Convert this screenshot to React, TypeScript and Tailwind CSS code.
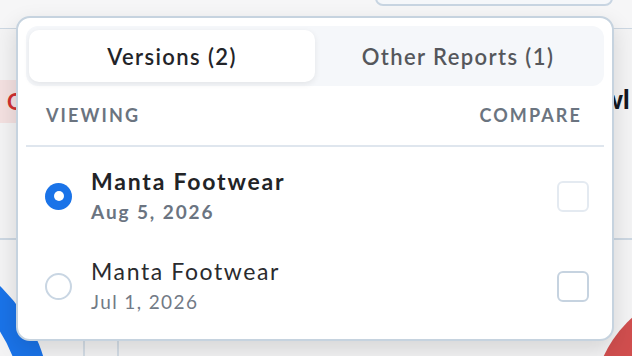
import React from 'react';

const font = { fontFamily: 'Lato, "Noto Sans", sans-serif' };

function Radio({ checked }: { checked: boolean }) {
  if (checked) {
    return (
      <span className="w-[27px] h-[27px] rounded-full bg-[#1a73e8] flex items-center justify-center shrink-0">
        <span className="w-[10px] h-[10px] rounded-full bg-white" />
      </span>
    );
  }
  return <span className="w-[27px] h-[27px] rounded-full border-2 border-[#c9d6e3] bg-white shrink-0" />;
}

function Row({
  name,
  date,
  active,
}: {
  name: string;
  date: string;
  active: boolean;
}) {
  return (
    <div className="h-[90px] flex items-center pl-[19px] pr-[15px]">
      <Radio checked={active} />
      <div className="ml-[19px] flex-1 flex flex-col">
        <span
          className={
            active
              ? 'text-[23px] leading-[31px] font-bold tracking-[1.8px] text-[#222326]'
              : 'text-[23px] leading-[31px] font-normal tracking-[1.6px] text-[#2a2b2e]'
          }
        >
          {name}
        </span>
        <span
          className={
            active
              ? 'text-[19px] leading-[29px] font-bold tracking-[1.9px] text-[#6b7481]'
              : 'text-[19px] leading-[29px] font-normal tracking-[1.4px] text-[#727a86]'
          }
        >
          {date}
        </span>
      </div>
      <span
        className={
          active
            ? 'w-[32px] h-[31px] rounded-[6px] border-2 border-[#e4eaf1] bg-white shrink-0'
            : 'w-[32px] h-[31px] rounded-[6px] border-2 border-[#c6d3e0] bg-white shrink-0'
        }
      />
    </div>
  );
}

export default function App() {
  return (
    <div className="w-[632px] h-[356px] relative overflow-hidden bg-[#f3f3f4]" style={font}>
      {/* page behind the popover */}
      <div className="absolute left-0 right-0 top-0 h-[29px] border-b border-[#ccd7e2] bg-[#f6f6f7]" />
      <div className="absolute left-[375px] top-[-20px] w-[238px] h-[26px] rounded-lg border-2 border-[#c8d5e2] bg-[#f5f7fa]" />
      <div className="absolute left-0 top-[80px] w-[40px] h-[43px] bg-[#f3e0e0] flex items-center pl-[7px]">
        <span className="text-[22px] font-bold text-[#d02f2f]">O</span>
      </div>
      <div className="absolute right-0 top-[84px] w-[40px] h-[30px] flex items-center">
        <span className="text-[26px] font-black text-[#141821] ml-[10px]">wl</span>
      </div>
      <div className="absolute left-0 right-0 top-[238px] h-[2px] bg-[#ccd7e2]" />
      <div className="absolute left-[83px] top-[330px] w-[2px] h-[30px] bg-[#d4dde6]" />
      <div className="absolute left-[117px] top-[330px] w-[2px] h-[30px] bg-[#d4dde6]" />
      <svg className="absolute left-0 top-0" width="632" height="356">
        <circle cx="-115" cy="405" r="151" fill="none" stroke="#1a73e8" strokeWidth="29" />
        <circle cx="710" cy="405" r="117" fill="#d04e4e" />
      </svg>

      {/* popover */}
      <div className="absolute left-[16px] top-[16px] w-[598px] h-[325px] rounded-[14px] border-2 border-[#c6d3df] bg-white shadow-[0_8px_22px_rgba(0,0,0,0.13)] px-[8px] pt-[8px]">
        <div className="h-[60px] rounded-[12px] bg-[#f5f7fa] grid grid-cols-2 py-[4px] px-[3px]">
          <div className="rounded-[10px] bg-white shadow-[0_2px_6px_rgba(0,0,0,0.08)] flex items-center justify-center text-[22px] font-semibold tracking-[1.4px] text-[#232428]">
            Versions (2)
          </div>
          <div className="flex items-center justify-center text-[22px] font-semibold tracking-[1.4px] text-[#55575c]">
            Other Reports (1)
          </div>
        </div>
        <div className="h-[61px] flex items-center justify-between pl-[20px] pr-[22px] border-b-2 border-[#dfe6ee]">
          <span className="text-[18px] font-bold tracking-[2.1px] text-[#6b7480]">VIEWING</span>
          <span className="text-[18px] font-bold tracking-[2.1px] text-[#6b7480]">COMPARE</span>
        </div>
        <div className="pt-[4px]">
          <Row name="Manta Footwear" date="Aug 5, 2026" active />
          <Row name="Manta Footwear" date="Jul 1, 2026" active={false} />
        </div>
      </div>
    </div>
  );
}
